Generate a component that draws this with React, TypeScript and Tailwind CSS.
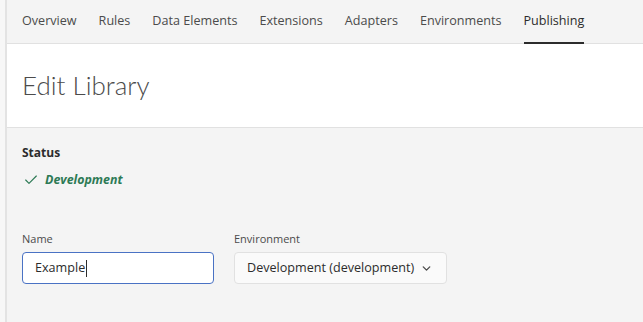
import { Check, ChevronDown } from "lucide-react";

const tabs = ["Overview", "Rules", "Data Elements", "Extensions", "Adapters", "Environments", "Publishing"];

const Tab = ({ label, active }: { label: string; active?: boolean }) => {
  return (
    <div className="relative flex h-full items-center">
      <span className={active ? "text-[#2c2c2c]" : "text-[#4b4b4b]"}>{label}</span>
      {active && <div className="absolute bottom-[-1px] left-0 right-0 h-[2px] bg-[#2c2c2c]" />}
    </div>
  );
};

export default function App() {
  return (
    <div
      className="flex h-[322px] w-[643px] overflow-hidden bg-[#f4f4f4] text-[12.6px]"
      style={{ fontFamily: '"Open Sans", "Noto Sans", sans-serif' }}
    >
      <div className="w-[7px] shrink-0 border-r-2 border-[#e3e3e3] bg-[#f7f7f7]" />
      <div className="flex flex-1 flex-col">
        {/* tab bar */}
        <div className="flex h-[44px] items-center gap-[22px] border-b border-[#e1e1e1] bg-[#f4f4f4] pl-[15px]">
          {tabs.map((t) => (
            <Tab key={t} label={t} active={t === "Publishing"} />
          ))}
        </div>

        {/* header */}
        <div className="flex h-[84px] items-center border-b border-[#e1e1e1] bg-white pl-[15px]">
          <h1 className="font-['Lato',sans-serif] text-[26px] font-light text-[#4b4b4b]">Edit Library</h1>
        </div>

        {/* body */}
        <div className="flex flex-col px-[15px] pt-[16px]">
          <div className="text-[12px] font-bold text-[#2c2c2c]">Status</div>
          <div className="mt-[9px] flex items-center gap-[6px] text-[#2d7a55]">
            <Check size={16} strokeWidth={1.75} className="ml-[1px]" />
            <span className="text-[12.4px] font-bold italic">Development</span>
          </div>

          <div className="mt-[41px] flex gap-[20px]">
            <div className="flex flex-col">
              <label className="text-[11px] text-[#4b4b4b]">Name</label>
              <div className="mt-[5px] flex h-[32px] w-[192px] items-center rounded-[4px] border border-[#4a72c4] bg-white px-[12px] text-[#2c2c2c]">
                Example<span className="ml-[1px] h-[17px] w-px bg-[#2c2c2c]" />
              </div>
            </div>
            <div className="flex flex-col">
              <label className="text-[11px] text-[#4b4b4b]">Environment</label>
              <div className="mt-[5px] flex h-[32px] w-[213px] items-center justify-between rounded-[4px] border border-[#e1e1e1] bg-[#fafafa] pl-[12px] pr-[13px] text-[#2c2c2c]">
                <span>Development (development)</span>
                <ChevronDown size={13} strokeWidth={2.5} className="text-[#4b4b4b]" />
              </div>
            </div>
          </div>
        </div>
      </div>
    </div>
  );
}
